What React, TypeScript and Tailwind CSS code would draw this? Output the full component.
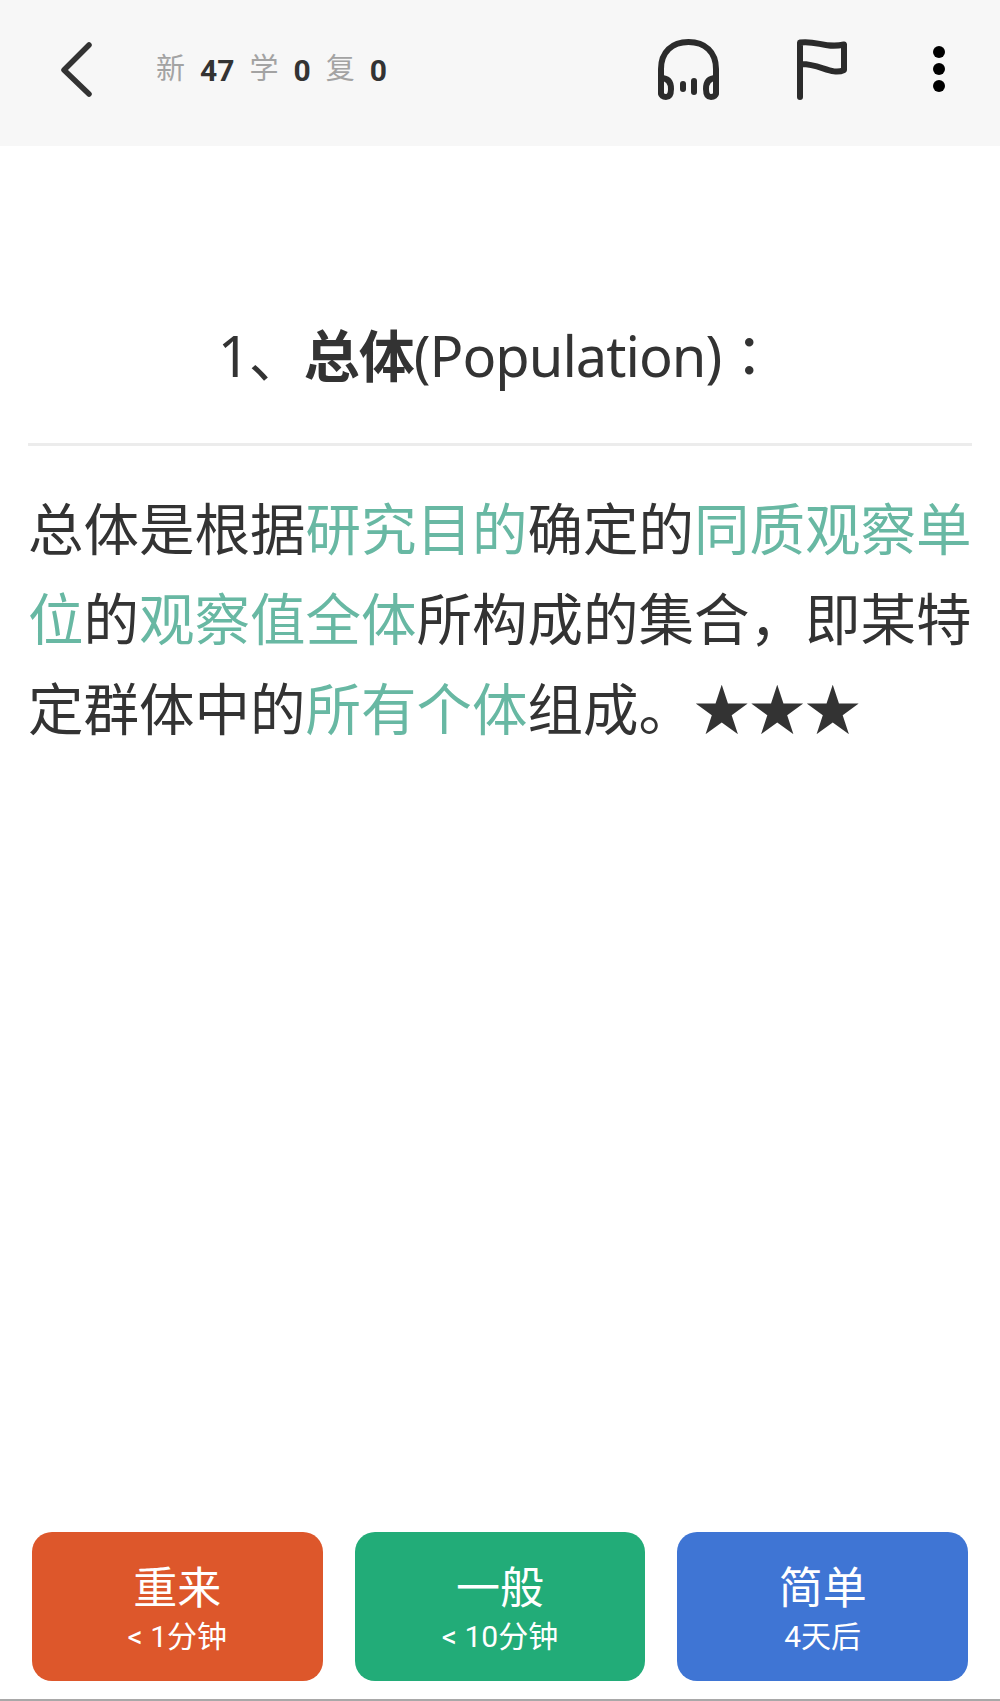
import React from 'react';

const sans = "font-['Roboto','Noto_Sans_CJK_SC',sans-serif]";

const Stat = ({ label, value }: { label: string; value: number }) => (
  <div className="flex items-center gap-[15px]">
    <span className="text-[29px] text-[#a3a3a3]">{label}</span>
    <span className="text-[30px] font-bold text-[#333333]">{value}</span>
  </div>
);

const Accent = ({ children }: { children: React.ReactNode }) => (
  <span className="text-[#68b8a3]">{children}</span>
);

const answers = [
  { title: '重来', sub: '< 1分钟', color: 'bg-[#dd572b]' },
  { title: '一般', sub: '< 10分钟', color: 'bg-[#22ac78]' },
  { title: '简单', sub: '4天后', color: 'bg-[#3f75d4]' },
];

export default function App() {
  return (
    <div className={`flex h-[1701px] w-[1000px] flex-col bg-white ${sans}`}>
      {/* Top bar */}
      <header className="flex h-[146px] shrink-0 items-center bg-[#f7f7f7] pr-[54px] pb-[8px] pl-[60px]">
        <svg className="h-[56px] w-[32px]" viewBox="0 0 32 56" fill="none" stroke="#333333" strokeWidth="5.5" strokeLinecap="round" strokeLinejoin="round">
          <path d="M29 4 L4 29 L29 53" />
        </svg>
        <div className="mt-[2px] ml-[64px] flex items-center gap-[15px]">
          <Stat label="新" value={47} />
          <Stat label="学" value={0} />
          <Stat label="复" value={0} />
        </div>
        <div className="ml-auto flex items-center">
          <svg className="h-[61px] w-[61px]" viewBox="0 0 61 61" fill="none" stroke="#2b2b2b" strokeWidth="6" strokeLinecap="round" strokeLinejoin="round">
            <path d="M3 54 V30 C3 13 14 3 30.5 3 C47 3 58 13 58 30 V54" />
            <path d="M3 39 C9 39 13 42 13 50 C13 56 11 58 8 58 C5 58 3 56.5 3 54" />
            <path d="M58 39 C52 39 48 42 48 50 C48 56 50 58 53 58 C56 58 58 56.5 58 54" />
            <path d="M25 45 V50" />
            <path d="M36 42 V53" />
          </svg>
          <svg className="ml-[78px] h-[61px] w-[50px]" viewBox="0 0 50 61" fill="none" stroke="#2b2b2b" strokeWidth="6" strokeLinecap="round" strokeLinejoin="round">
            <path d="M3 58 V3.5 C20 1 28 10 47 5.5 V31 C35 37 22 24 3 25" />
          </svg>
          <svg className="ml-[85px] h-[52px] w-[14px]" viewBox="0 0 14 52" fill="#000000">
            <circle cx="7" cy="9" r="6" />
            <circle cx="7" cy="26" r="6" />
            <circle cx="7" cy="43" r="6" />
          </svg>
        </div>
      </header>

      {/* Card content */}
      <main className="flex-1 px-[28px] text-[#333333]">
        <h1 className="mt-[173px] pr-[6px] text-center font-['Noto_Sans','Noto_Sans_CJK_SC',sans-serif] text-[56px] leading-[68px] font-normal tracking-[-1px]">
          1、<b className="font-bold">总体</b>(Population)
          <span className="font-['Noto_Sans_CJK_TC',sans-serif]">：</span>
        </h1>
        <hr className="mt-[54px] border-t-[3px] border-[#ececec]" />
        <p className="mt-[41px] text-[55.5px] leading-[90px]">
          总体是根据<Accent>研究目的</Accent>确定的<Accent>同质观察单位</Accent>的<Accent>观察值全体</Accent>所构成的集合，即某特定群体中的<Accent>所有个体</Accent>组成。★★★
        </p>
      </main>

      {/* Answer buttons */}
      <footer className="flex shrink-0 gap-[32px] border-b-[2px] border-[#a8a8a8] pr-[32px] pb-[18px] pl-[32px]">
        {answers.map((a) => (
          <button key={a.title} className={`flex h-[149px] flex-1 flex-col items-center justify-center rounded-[20px] pt-[4px] text-white ${a.color}`}>
            <span className="text-[44px] leading-[56px]">{a.title}</span>
            <span className="text-[30px] leading-[40px]">{a.sub}</span>
          </button>
        ))}
      </footer>
    </div>
  );
}
